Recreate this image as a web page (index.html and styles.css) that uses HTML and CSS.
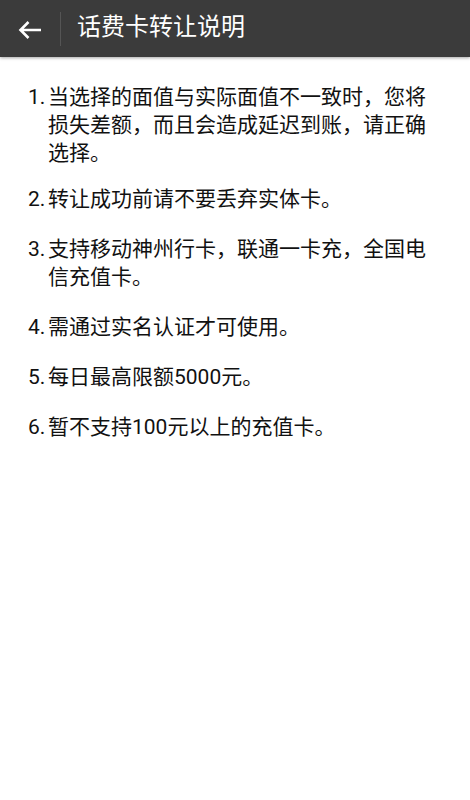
FILE: index.html
```html
<!DOCTYPE html>
<html lang="zh-CN">
<head>
    <meta charset="UTF-8">
    <meta name="viewport" content="width=device-width, initial-scale=1.0">
    <title>话费卡转让说明</title>
    <link rel="stylesheet" href="styles.css">
</head>
<body>
    <div class="header">
        <a href="#" class="back-btn">
            <svg width="24" height="20" viewBox="0 0 24 20">
                <path d="M23 10H2.5M10.5 2L2.5 10L10.5 18" fill="none" stroke="#fff" stroke-width="2.6"/>
            </svg>
        </a>
        <span class="divider"></span>
        <h1>话费卡转让说明</h1>
    </div>

    <div class="content">
        <div class="item">
            <span class="num">1.</span>
            <p>当选择的面值与实际面值不一致时，您将损失差额，而且会造成延迟到账，请正确选择。</p>
        </div>
        <div class="item">
            <span class="num">2.</span>
            <p>转让成功前请不要丢弃实体卡。</p>
        </div>
        <div class="item">
            <span class="num">3.</span>
            <p>支持移动神州行卡，联通一卡充，全国电信充值卡。</p>
        </div>
        <div class="item">
            <span class="num">4.</span>
            <p>需通过实名认证才可使用。</p>
        </div>
        <div class="item">
            <span class="num">5.</span>
            <p>每日最高限额5000元。</p>
        </div>
        <div class="item">
            <span class="num">6.</span>
            <p>暂不支持100元以上的充值卡。</p>
        </div>
    </div>
</body>
</html>
```

FILE: styles.css
```css
* {
    margin: 0;
    padding: 0;
    box-sizing: border-box;
}

body {
    font-family: Roboto, "Noto Sans CJK SC", sans-serif;
    background-color: #fff;
    color: #111;
}

.header {
    display: flex;
    align-items: center;
    height: 57px;
    background-color: #3b3b3b;
    box-shadow: 0 1px 3px rgba(0,0,0,0.35);
}

.back-btn {
    display: flex;
    align-items: center;
    justify-content: center;
    width: 40px;
    height: 57px;
    margin-left: 10px;
    padding-top: 3px;
}

.divider {
    width: 1px;
    height: 34px;
    margin-left: 10px;
    background-color: #555;
}

.header h1 {
    margin-left: 16px;
    font-size: 24px;
    font-weight: normal;
    color: #fff;
    line-height: 1;
    padding-bottom: 3px;
}

.content {
    padding: 26px 32px 0 28px;
}

.item {
    display: flex;
    font-size: 21px;
    line-height: 28px;
    margin-bottom: 22px;
}

.item:first-child {
    margin-bottom: 18px;
}

.num {
    flex: 0 0 20px;
}

.item p {
    flex: 1;
}
```
